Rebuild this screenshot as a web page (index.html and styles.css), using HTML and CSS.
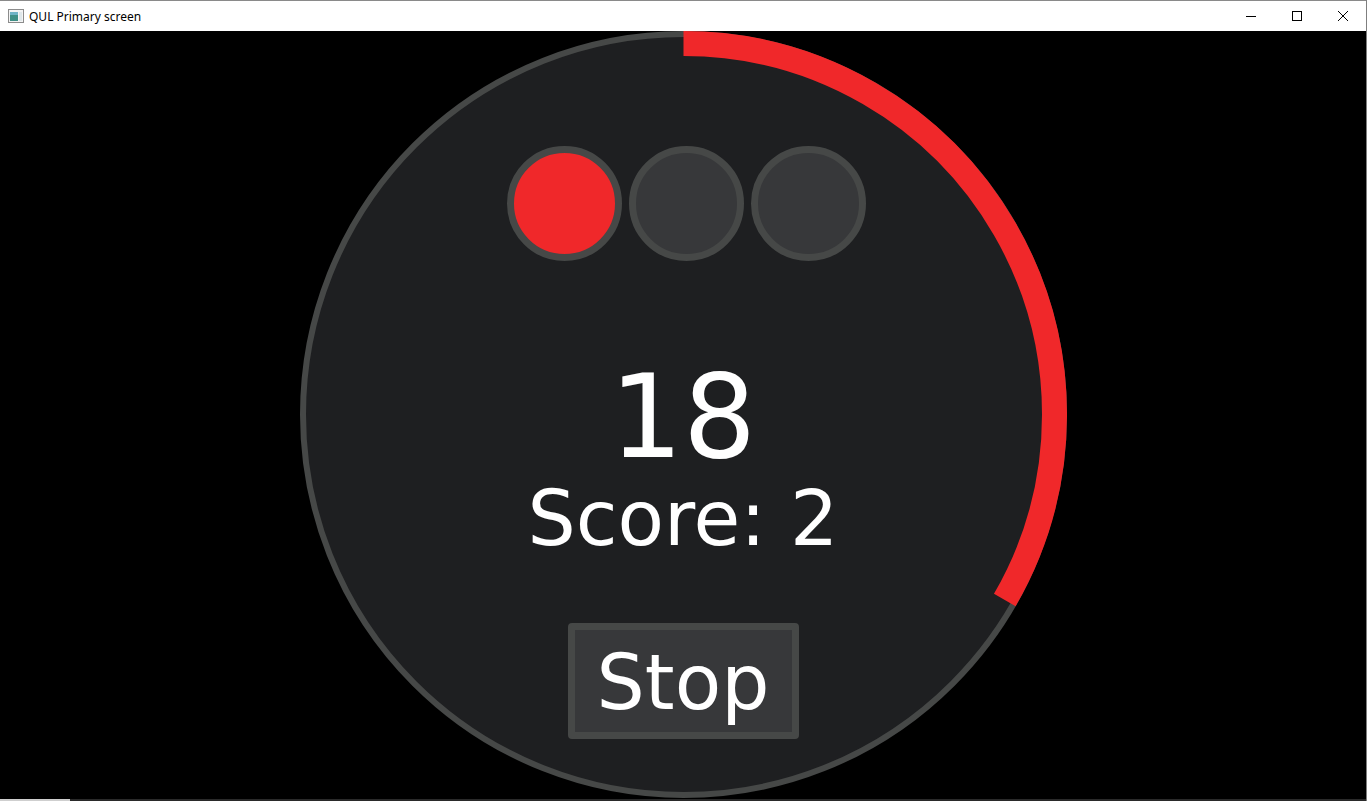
FILE: index.html
```html
<!DOCTYPE html>
<html lang="en">
<head>
    <meta charset="UTF-8">
    <meta name="viewport" content="width=device-width, initial-scale=1.0">
    <title>QUL Primary screen</title>
    <link rel="stylesheet" href="styles.css">
</head>
<body>
    <div class="window">
        <!-- Barra de título -->
        <div class="titlebar">
            <div class="title">
                <svg class="app-icon" width="16" height="14" viewBox="0 0 16 14">
                    <rect x="0.5" y="0.5" width="15" height="13" fill="#f4f4f4" stroke="#8c8c8c"/>
                    <rect x="2" y="3" width="8" height="9" fill="#3f8f86"/>
                    <rect x="2" y="3" width="8" height="3" fill="#6fb3c6"/>
                    <rect x="11" y="3" width="3" height="9" fill="#dfe7ea"/>
                </svg>
                <span>QUL Primary screen</span>
            </div>
            <div class="controls">
                <div class="ctrl">
                    <svg width="10" height="10" viewBox="0 0 10 10"><path d="M0 5.5H10" stroke="#000" stroke-width="1"/></svg>
                </div>
                <div class="ctrl">
                    <svg width="10" height="10" viewBox="0 0 10 10"><rect x="0.5" y="0.5" width="9" height="9" fill="none" stroke="#000" stroke-width="1"/></svg>
                </div>
                <div class="ctrl">
                    <svg width="10" height="10" viewBox="0 0 10 10"><path d="M0 0L10 10M10 0L0 10" stroke="#000" stroke-width="1"/></svg>
                </div>
            </div>
        </div>

        <!-- Tela principal -->
        <div class="screen">
            <div class="dial">
                <svg class="progress" width="767" height="767" viewBox="0 0 767 767">
                    <path d="M383.5 12.5 A371 371 0 0 1 704.8 569" fill="none" stroke="#f0282a" stroke-width="25"/>
                </svg>

                <div class="lights">
                    <div class="light on"></div>
                    <div class="light"></div>
                    <div class="light"></div>
                </div>

                <div class="counter">18</div>
                <div class="score">Score: 2</div>

                <button class="btn-stop">Stop</button>
            </div>
        </div>

        <div class="taskbar-edge"></div>
    </div>
</body>
</html>
```

FILE: styles.css
```css
body {
    margin: 0;
    padding: 0;
    background-color: #000;
    overflow: hidden;
}

.window {
    width: 1366px;
    height: 801px;
    border-right: 1px solid #7f7f7f;
    display: flex;
    flex-direction: column;
}

.titlebar {
    height: 30px;
    border-top: 1px solid #8a8a8a;
    background: #fff;
    display: flex;
    justify-content: space-between;
    align-items: center;
    flex-shrink: 0;
}

.title {
    display: flex;
    align-items: center;
    padding-left: 8px;
    font-family: "Noto Sans", "Liberation Sans", sans-serif;
    font-size: 12px;
    color: #000;
}

.title .app-icon {
    margin-right: 5px;
}

.controls {
    display: flex;
    height: 100%;
}

.ctrl {
    width: 46px;
    height: 100%;
    display: flex;
    align-items: center;
    justify-content: center;
}

.screen {
    height: 768px;
    background: #000;
    display: flex;
    justify-content: center;
    flex-shrink: 0;
}

.dial {
    position: relative;
    width: 767px;
    height: 767px;
    box-sizing: border-box;
    border: 6px solid #464847;
    border-radius: 50%;
    background: #1e1f21;
    display: flex;
    flex-direction: column;
    align-items: center;
    font-family: "DejaVu Sans", sans-serif;
    color: #fff;
}

.progress {
    position: absolute;
    left: -6px;
    top: -6px;
}

.lights {
    display: flex;
    gap: 7px;
    margin-top: 109px;
    margin-left: 6px;
}

.light {
    width: 115px;
    height: 115px;
    box-sizing: border-box;
    border-radius: 50%;
    border: 7px solid #464847;
    background: #37383a;
}

.light.on {
    background: #f0282a;
}

.counter {
    font-size: 115px;
    line-height: 115px;
    margin-top: 99px;
}

.score {
    font-size: 76px;
    line-height: 76px;
    margin-top: 6px;
}

.btn-stop {
    margin-top: 66px;
    width: 231px;
    height: 116px;
    box-sizing: border-box;
    padding: 15px 0 11px;
    border: 7px solid #464847;
    border-radius: 4px;
    background: #37383a;
    color: #fff;
    font-family: "DejaVu Sans", sans-serif;
    font-size: 76px;
    line-height: 76px;
}

.taskbar-edge {
    height: 2px;
    background: linear-gradient(to right, #cfcfcf 0, #cfcfcf 70px, #2a2a2a 70px, #2a2a2a 100%);
}
```
